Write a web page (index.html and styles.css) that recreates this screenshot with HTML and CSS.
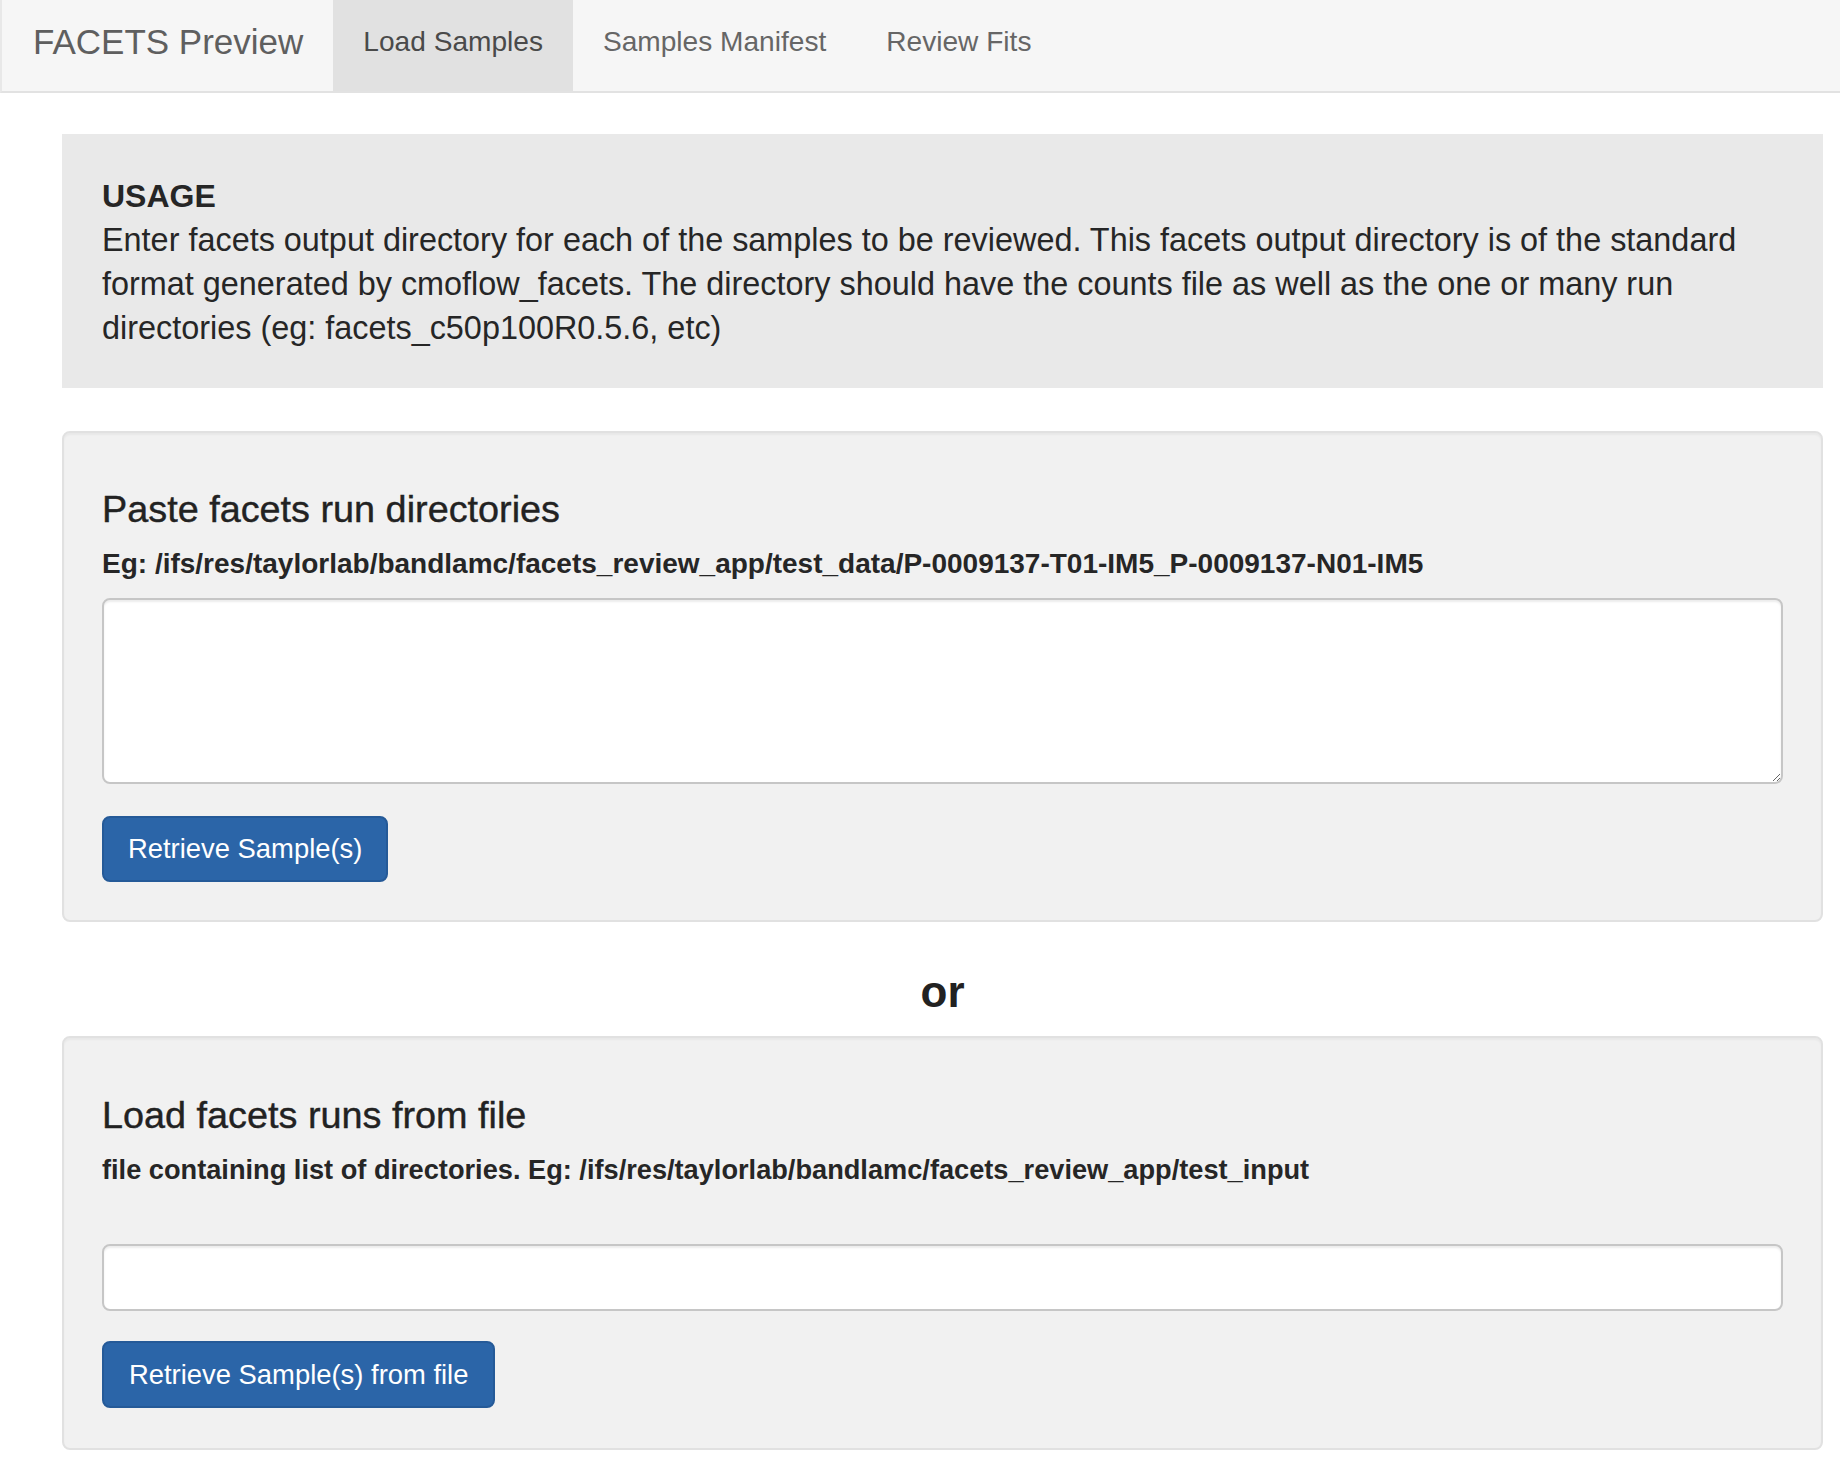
FILE: index.html
```html
<!DOCTYPE html>
<html lang="en">
<head>
<meta charset="utf-8">
<title>FACETS Preview</title>
<link rel="stylesheet" href="styles.css">
</head>
<body>
<nav class="navbar">
  <span class="brand">FACETS Preview</span>
  <ul class="nav">
    <li class="nav-item active">Load Samples</li>
    <li class="nav-item">Samples Manifest</li>
    <li class="nav-item">Review Fits</li>
  </ul>
</nav>
<main class="content">
  <section class="usage">
    <div class="usage-title">USAGE</div>
    <div class="usage-text">Enter facets output directory for each of the samples to be reviewed. This facets output directory is of the standard format generated by cmoflow_facets. The directory should have the counts file as well as the one or many run directories (eg: facets_c50p100R0.5.6, etc)</div>
  </section>

  <section class="panel panel-paste">
    <h3 class="panel-title">Paste facets run directories</h3>
    <label class="field-label" for="dirs">Eg: /ifs/res/taylorlab/bandlamc/facets_review_app/test_data/P-0009137-T01-IM5_P-0009137-N01-IM5</label>
    <textarea class="textarea" id="dirs"></textarea>
    <button class="btn" type="button">Retrieve Sample(s)</button>
  </section>

  <div class="or">or</div>

  <section class="panel panel-file">
    <h3 class="panel-title">Load facets runs from file</h3>
    <label class="field-label field-label-sm" for="file">file containing list of directories. Eg: /ifs/res/taylorlab/bandlamc/facets_review_app/test_input</label>
    <input class="text-input" id="file" type="text">
    <button class="btn" type="button">Retrieve Sample(s) from file</button>
  </section>
</main>
</body>
</html>
```

FILE: styles.css
```css
* { box-sizing: border-box; }

html, body {
  margin: 0;
  padding: 0;
  background: #ffffff;
}

body {
  font-family: "Liberation Sans", Arial, Helvetica, sans-serif;
  color: #262626;
}

/* ---------- navbar ---------- */
.navbar {
  display: flex;
  align-items: stretch;
  height: 93px;
  background: #f6f6f6;
  border-bottom: 2px solid #e2e2e2;
  border-left: 2px solid #e8e8e8;
}

.brand {
  display: flex;
  align-items: center;
  padding: 0 30px 8px 31px;
  font-size: 35px;
  color: #5f5f5f;
  white-space: nowrap;
}

.nav {
  display: flex;
  margin: 0;
  padding: 0;
  list-style: none;
}

.nav-item {
  display: flex;
  align-items: center;
  padding: 0 30px 8px 30px;
  font-size: 28.1px;
  color: #666666;
  white-space: nowrap;
}

.nav-item.active {
  background: #e1e1e1;
  color: #4a4a4a;
}

/* ---------- content ---------- */
.content {
  padding: 41px 17px 0 62px;
}

.usage {
  background: #e9e9e9;
  padding: 40px 40px 38px 40px;
  font-size: 32.4px;
  line-height: 44px;
  color: #262626;
}

.usage-title {
  font-weight: bold;
  font-size: 32px;
}

.panel {
  display: flex;
  flex-direction: column;
  align-items: flex-start;
  margin-top: 43px;
  background: #f1f1f1;
  border: 2px solid #e1e1e1;
  border-radius: 8px;
  padding: 38px 38px 38px 38px;
  box-shadow: inset 0 2px 2px rgba(0, 0, 0, 0.04);
}

.panel-file {
  padding-bottom: 40px;
}

.panel-title {
  margin: 18px 0 0 0;
  font-size: 37.8px;
  line-height: 40px;
  font-weight: normal;
  color: #222222;
  -webkit-text-stroke: 0.4px #222222;
}

.panel-file .panel-title {
  margin-top: 19px;
}

.field-label {
  margin-top: 15px;
  font-size: 28px;
  line-height: 40px;
  font-weight: bold;
  color: #262626;
}

.field-label-sm {
  font-size: 27.2px;
}

.textarea,
.text-input {
  display: block;
  width: 100%;
  margin: 14px 0 0 0;
  background: #ffffff;
  border: 2px solid #c6c6c6;
  border-radius: 8px;
  box-shadow: inset 0 2px 2px rgba(0, 0, 0, 0.075);
  font-family: "Liberation Sans", Arial, sans-serif;
  font-size: 28px;
  padding: 12px 24px;
}

.textarea {
  height: 186px;
  resize: vertical;
}

.text-input {
  height: 67px;
  margin-top: 54px;
}

.btn {
  margin-top: 32px;
  height: 66px;
  padding: 0 24px;
  background: #2b65a8;
  border: 2px solid #255a98;
  border-radius: 8px;
  color: #ffffff;
  font-family: "Liberation Sans", Arial, sans-serif;
  font-size: 27.4px;
  line-height: 1;
  cursor: pointer;
}

.panel-file .btn {
  margin-top: 30px;
  height: 67px;
  padding: 0 25px;
}

.or {
  padding: 46px 0 0 0;
  height: 114px;
  margin-bottom: -43px;
  text-align: center;
  font-size: 44px;
  line-height: 48px;
  font-weight: bold;
  color: #222222;
}
```
